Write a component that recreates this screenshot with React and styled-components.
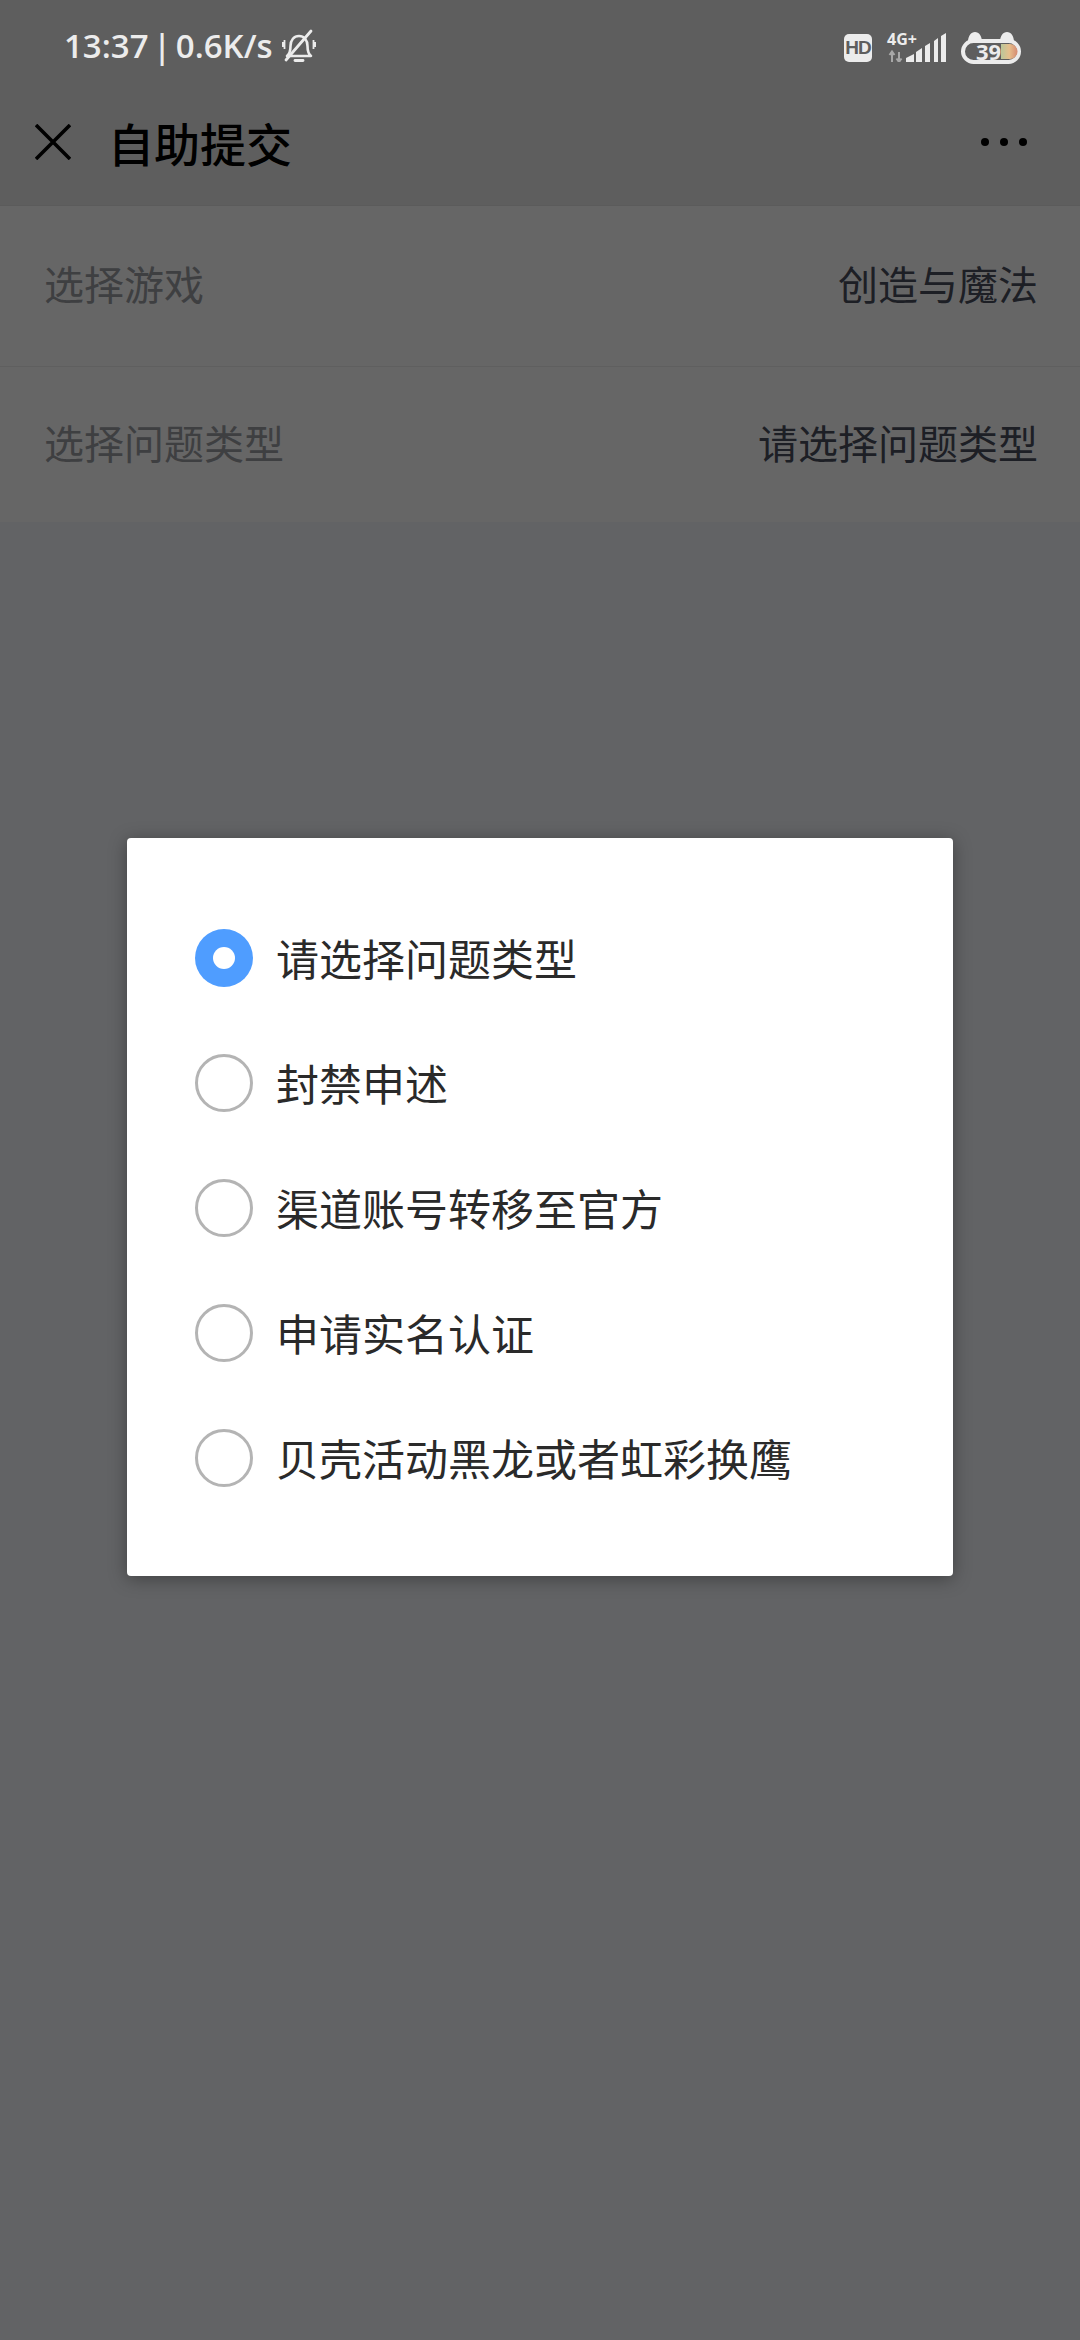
import React from "react";
import styled, { createGlobalStyle } from "styled-components";

const GlobalStyle = createGlobalStyle`
  html, body {
    margin: 0;
    padding: 0;
    background: #f6f7fb;
  }
  * {
    box-sizing: border-box;
  }
`;

const Page = styled.div`
  position: relative;
  width: 1080px;
  height: 2340px;
  overflow: hidden;
  background: #f6f8fc;
  font-family: "Noto Sans CJK SC", "Noto Sans", sans-serif;
`;

const Scrim = styled.div`
  position: absolute;
  inset: 0;
  z-index: 1;
  background: rgba(0, 0, 0, 0.6);
`;

const TopArea = styled.div`
  background: #ececec;
`;

const StatusBar = styled.div`
  position: relative;
  z-index: 2;
  height: 84px;
  padding: 15px 59px 0 64px;
  display: flex;
  justify-content: space-between;
  align-items: flex-start;
  color: #ececec;
`;

const StatusLeft = styled.div`
  display: flex;
  align-items: center;
  height: 62px;
`;

const StatusText = styled.span`
  font-family: "Open Sans", sans-serif;
  font-size: 33px;
  font-weight: 600;
  line-height: 62px;
  word-spacing: -4px;
  white-space: nowrap;
`;

const BellIcon = styled.svg`
  width: 34px;
  height: 34px;
  margin-left: 9px;
`;

const StatusRight = styled.div`
  display: flex;
  align-items: flex-start;
  padding-top: 17px;
`;

const HdBadge = styled.div`
  width: 28px;
  height: 28px;
  margin-top: 2px;
  border-radius: 5px;
  background: #ececec;
  color: #5e5e5e;
  font: 700 19px/28px "Liberation Sans", sans-serif;
  letter-spacing: -1px;
  text-align: center;
`;

const NetworkBox = styled.div`
  position: relative;
  width: 60px;
  height: 30px;
  margin-left: 15px;
`;

const NetworkLabel = styled.span`
  position: absolute;
  left: 0;
  top: 0;
  font: 700 16px/14px "Open Sans", sans-serif;
  color: #ececec;
`;

const SignalIcon = styled.svg`
  position: absolute;
  left: 0;
  top: 0;
  width: 60px;
  height: 30px;
`;

const BatteryBox = styled.div`
  position: relative;
  width: 60px;
  height: 34px;
  margin-left: 14px;
  margin-top: -2px;
`;

const BatteryIcon = styled.svg`
  width: 60px;
  height: 34px;
  display: block;
`;

const BatteryLevel = styled.span`
  position: absolute;
  left: 15px;
  top: 10px;
  font: 700 22px/22px "Open Sans", sans-serif;
  color: #ececec;
`;

const Header = styled.div`
  height: 122px;
  padding: 0 30px 6px 35px;
  display: flex;
  align-items: center;
  border-bottom: 1px solid #e4e4e4;
`;

const CloseIcon = styled.svg`
  width: 36px;
  height: 36px;
  flex: none;
`;

const Title = styled.h1`
  flex: 1;
  margin: 0 0 0 37px;
  font-size: 46px;
  font-weight: 500;
  line-height: 60px;
  color: #000;
`;

const MoreDots = styled.div`
  display: flex;
  gap: 11px;
  margin-right: 23px;
`;

const Dot = styled.span`
  width: 8px;
  height: 8px;
  border-radius: 50%;
  background: #000;
`;

const FormList = styled.div`
  background: #fff;
`;

const FormRow = styled.div`
  height: ${(props) => props.$height}px;
  padding: 0 42px 6px 44px;
  display: flex;
  justify-content: space-between;
  align-items: center;
  font-size: 40px;
  line-height: 56px;
  border-bottom: ${(props) => (props.$divider ? "1px solid #ededed" : "none")};
`;

const FormLabel = styled.span`
  color: #9b9da3;
`;

const FormValue = styled.span`
  color: #4a4e5c;
`;

const Dialog = styled.div`
  position: absolute;
  z-index: 2;
  left: 127px;
  top: 838px;
  width: 826px;
  height: 738px;
  padding: 57px 68px;
  background: #fff;
  border-radius: 4px;
  box-shadow: 0 3px 18px rgba(0, 0, 0, 0.35);
`;

const Option = styled.div`
  height: 125px;
  display: flex;
  align-items: center;
  gap: 23px;
`;

const Radio = styled.span`
  width: 58px;
  height: 58px;
  flex: none;
  border-radius: 50%;
  display: flex;
  justify-content: center;
  align-items: center;
  background: ${(props) => (props.$checked ? "#4f9dff" : "#fff")};
  border: ${(props) => (props.$checked ? "none" : "3px solid #b4b4b4")};
`;

const RadioDot = styled.span`
  width: 22px;
  height: 22px;
  border-radius: 50%;
  background: #fff;
`;

const OptionText = styled.span`
  font-size: 43px;
  line-height: 60px;
  padding-bottom: 2px;
  color: #2a2a2a;
`;

const options = [
  "请选择问题类型",
  "封禁申述",
  "渠道账号转移至官方",
  "申请实名认证",
  "贝壳活动黑龙或者虹彩换鹰",
];

const App = () => {
  return (
    <Page>
      <GlobalStyle />
      <TopArea>
        <StatusBar>
          <StatusLeft>
            <StatusText>13:37 | 0.6K/s</StatusText>
            <BellIcon viewBox="0 0 34 34" fill="none" stroke="#ececec">
              <path
                d="M5 27c2.500-2 3.500-5 3.500-10 0-6 3.500-10 8.500-10s8.500 4 8.500 10c0 5 1 8 3.500 10z"
                strokeWidth="2.600"
                strokeLinejoin="round"
              />
              <path d="M13 31.500h8" strokeWidth="2.800" strokeLinecap="round" />
              <path d="M4 31L29 2" strokeWidth="2.800" strokeLinecap="round" />
              <path d="M2.500 11v9M.8 13v5M31.500 11v9M33.200 13v5" strokeWidth="1.800" />
            </BellIcon>
          </StatusLeft>
          <StatusRight>
            <HdBadge>HD</HdBadge>
            <NetworkBox>
              <NetworkLabel>4G+</NetworkLabel>
              <SignalIcon viewBox="0 0 60 30">
                <path d="M5 20v10M2.500 23l2.500-3.500 2.500 3.500M12 30v-10M9.500 26.500l2.500 3.500 2.500-3.500" stroke="#a8a8a8" strokeWidth="2" fill="none" />
                <path
                  d="M19 30v-4l8-4v8zM29 30v-10l6-4v14zM38 30v-16l5-3v19zM47 30v-21l4-3v24zM54 30v-26l5-3v29z"
                  fill="#ececec"
                />
              </SignalIcon>
            </NetworkBox>
            <BatteryBox>
              <BatteryIcon viewBox="0 0 60 34">
                <defs>
                  <linearGradient id="batteryFill" x1="0" x2="1" y1="0" y2="0">
                    <stop offset="0" stopColor="#b9c79a" />
                    <stop offset="0.5" stopColor="#e6bf8c" />
                    <stop offset="1" stopColor="#d58a72" />
                  </linearGradient>
                </defs>
                <path d="M7 12c0-6 3-10 7-10s7 4 7 10zM39 12c0-6 3-10 7-10s7 4 7 10z" fill="#ececec" />
                <rect x="2" y="11" width="56" height="21" rx="10.500" fill="#5e5e5e" stroke="#ececec" strokeWidth="4" />
                <path d="M40 14h9a7.500 7.500 0 0 1 0 15h-9z" fill="url(#batteryFill)" />
              </BatteryIcon>
              <BatteryLevel>39</BatteryLevel>
            </BatteryBox>
          </StatusRight>
        </StatusBar>
        <Header>
          <CloseIcon viewBox="0 0 36 36" stroke="#000" strokeWidth="3.600" fill="none">
            <path d="M1 1l34 34M35 1L1 35" />
          </CloseIcon>
          <Title>自助提交</Title>
          <MoreDots>
            <Dot />
            <Dot />
            <Dot />
          </MoreDots>
        </Header>
      </TopArea>
      <FormList>
        <FormRow $height={161} $divider>
          <FormLabel>选择游戏</FormLabel>
          <FormValue>创造与魔法</FormValue>
        </FormRow>
        <FormRow $height={155}>
          <FormLabel>选择问题类型</FormLabel>
          <FormValue>请选择问题类型</FormValue>
        </FormRow>
      </FormList>
      <Scrim />
      <Dialog>
        {options.map((text, i) => (
          <Option key={text}>
            <Radio $checked={i === 0}>{i === 0 && <RadioDot />}</Radio>
            <OptionText>{text}</OptionText>
          </Option>
        ))}
      </Dialog>
    </Page>
  );
};

export default App;
